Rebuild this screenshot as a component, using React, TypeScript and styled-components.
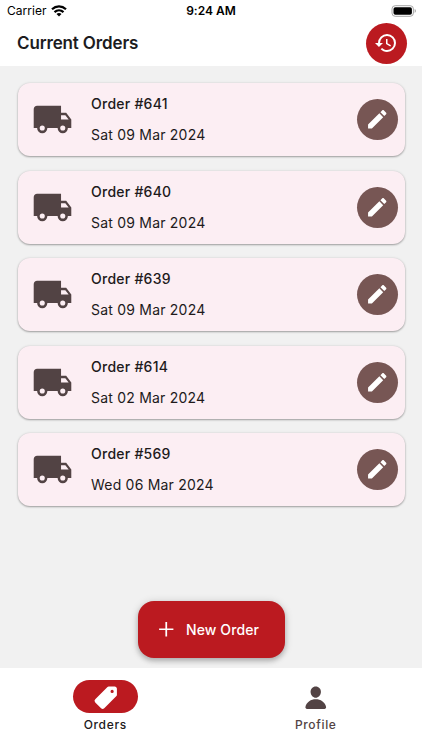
import React from "react";
import styled, { createGlobalStyle } from "styled-components";
import { IoPricetag, IoPerson } from "react-icons/io5";

const GlobalStyle = createGlobalStyle`
  * { box-sizing: border-box; }
  body { margin: 0; font-family: Inter, "Liberation Sans", sans-serif; color: #211a1b; background: #f1f1f1; }
  button { font: inherit; border: 0; padding: 0; cursor: pointer; }
  svg { display: block; }
`;

const Screen = styled.div`
  width: 100%;
  height: 750px;
  display: flex;
  flex-direction: column;
  overflow: hidden;
  background: #f1f1f1;
`;

const StatusBar = styled.div`
  height: 22px;
  flex: none;
  display: grid;
  grid-template-columns: 1fr auto 1fr;
  align-items: center;
  padding: 0 5px 0 7px;
  background: #fff;
  color: #000;
`;

const Carrier = styled.div`
  display: flex;
  align-items: center;
  gap: 4px;
  font-size: 12px;
  letter-spacing: 0.04px;
  line-height: 22px;
`;

const Clock = styled.div`
  font-size: 12px;
  font-weight: 600;
  letter-spacing: 0.02px;
  line-height: 22px;
  padding-right: 2px;
`;

const BatterySlot = styled.div`
  justify-self: end;
  padding-bottom: 1px;
`;

const Header = styled.header`
  height: 43.5px;
  flex: none;
  display: flex;
  align-items: center;
  justify-content: space-between;
  padding: 0 15.5px 1.5px 17px;
  background: #fff;
`;

const Title = styled.h1`
  margin: 0;
  font-size: 17px;
  font-weight: 600;
  line-height: 22px;
  letter-spacing: -0.14px;
  color: #1c1c1e;
`;

const RoundButton = styled.button<{ $color: string }>`
  width: 41px;
  height: 41px;
  flex: none;
  display: grid;
  place-items: center;
  border-radius: 50%;
  color: #fff;
  background: ${(p) => p.$color};
`;

const Content = styled.main`
  flex: 1;
  display: flex;
  flex-direction: column;
  align-items: center;
  justify-content: space-between;
  padding: 17.5px 17.5px 10px;
`;

const OrderList = styled.div`
  width: 100%;
  display: flex;
  flex-direction: column;
  gap: 14.5px;
`;

const OrderCard = styled.article`
  height: 73px;
  display: flex;
  align-items: center;
  padding: 0 6.5px 0 14px;
  border-radius: 12px;
  background: #fceef3;
  box-shadow: 0 1px 2px rgba(0, 0, 0, 0.32), 0 0 3px rgba(0, 0, 0, 0.1);
`;

const OrderText = styled.div`
  flex: 1;
  padding-left: 18.5px;
`;

const OrderName = styled.div`
  font-size: 14px;
  font-weight: 500;
  line-height: 20px;
  letter-spacing: 0.25px;
`;

const OrderDate = styled.div`
  margin-top: 11px;
  font-size: 14px;
  line-height: 20px;
  letter-spacing: 0.21px;
`;

const NewOrderButton = styled.button`
  width: 147px;
  height: 57px;
  display: flex;
  align-items: center;
  gap: 8px;
  padding-left: 16px;
  border-radius: 16px;
  background: #bb1a20;
  color: #fff;
  font-size: 14px;
  font-weight: 500;
  letter-spacing: 0.1px;
  box-shadow: 0 3px 5px rgba(0, 0, 0, 0.2), 0 1px 8px rgba(0, 0, 0, 0.16);
`;

const TabBar = styled.nav`
  height: 82px;
  flex: none;
  display: grid;
  grid-template-columns: 1fr 1fr;
  padding: 12px 1px 0 0;
  background: #fff;
`;

const Tab = styled.div`
  display: flex;
  flex-direction: column;
  align-items: center;
  gap: 4px;
`;

const TabPill = styled.div<{ $active?: boolean }>`
  width: 65px;
  height: 33px;
  display: grid;
  place-items: center;
  padding-top: 2px;
  border-radius: 17px;
  background: ${(p) => (p.$active ? "#bb1a20" : "transparent")};
  color: ${(p) => (p.$active ? "#fff" : "#524344")};
`;

const TabLabel = styled.div<{ $active?: boolean }>`
  font-size: 12px;
  font-weight: 500;
  line-height: 16px;
  letter-spacing: 0.65px;
  color: ${(p) => (p.$active ? "#211a1b" : "#524344")};
`;

const TRUCK =
  "M18 18.5A1.5 1.5 0 0 1 16.5 17A1.5 1.5 0 0 1 18 15.5A1.5 1.5 0 0 1 19.5 17A1.5 1.5 0 0 1 18 18.5M19.5 9.5L21.46 12H17V9.5M6 18.5A1.5 1.5 0 0 1 4.5 17A1.5 1.5 0 0 1 6 15.5A1.5 1.5 0 0 1 7.5 17A1.5 1.5 0 0 1 6 18.5M20 8H17V4H3C1.89 4 1 4.89 1 6V17H3A3 3 0 0 0 6 20A3 3 0 0 0 9 17H15A3 3 0 0 0 18 20A3 3 0 0 0 21 17H23V12L20 8Z";
const PENCIL =
  "M20.71 7.04C21.1 6.65 21.1 6 20.71 5.63L18.37 3.29C18 2.9 17.35 2.9 16.96 3.29L15.12 5.12L18.87 8.87M3 17.25V21H6.75L17.81 9.93L14.06 6.18L3 17.25Z";
const HISTORY =
  "M13.5 8H12V13L16.28 15.54L17 14.33L13.5 12.25V8M13 3A9 9 0 0 0 4 12H1L4.96 16.03L9 12H6A7 7 0 0 1 13 5A7 7 0 0 1 20 12A7 7 0 0 1 13 19C11.07 19 9.32 18.21 8.06 16.94L6.64 18.36C8.27 20 10.5 21 13 21A9 9 0 0 0 22 12A9 9 0 0 0 13 3";
const PLUS = "M19 12.85H12.85V19H11.15V12.85H5V11.15H11.15V5H12.85V11.15H19V12.85Z";

const Icon = ({ d, size, color = "currentColor" }: { d: string; size: number; color?: string }) => (
  <svg width={size} height={size} viewBox="0 0 24 24" fill={color} aria-hidden="true">
    <path d={d} />
  </svg>
);

const Wifi = () => (
  <svg width="16" height="12" viewBox="0 0 16 12" fill="none" stroke="#000" strokeWidth="2.2" aria-hidden="true">
    <path d="M1 4.3C5 .5 11 .5 15 4.3" />
    <path d="M3.5 7.1C6.1 4.7 9.9 4.7 12.5 7.1" />
    <path d="M8 11.4L5.5 8.9C6.9 7.7 9.1 7.7 10.5 8.9Z" fill="#000" stroke="none" />
  </svg>
);

const Battery = () => (
  <svg width="26" height="12" viewBox="0 0 26 12" aria-hidden="true">
    <rect x="1" y=".7" width="21.4" height="10.6" rx="3.2" fill="#fff" stroke="#a6a6a6" />
    <rect x="2.5" y="2.2" width="18.4" height="7.6" rx="1.8" fill="#000" />
    <path d="M23.7 4.1C25.2 4.7 25.2 7.3 23.7 7.9Z" fill="#999" />
  </svg>
);

const orders = [
  { id: 641, date: "Sat 09 Mar 2024" },
  { id: 640, date: "Sat 09 Mar 2024" },
  { id: 639, date: "Sat 09 Mar 2024" },
  { id: 614, date: "Sat 02 Mar 2024" },
  { id: 569, date: "Wed 06 Mar 2024" },
];

export default function App() {
  return (
    <Screen>
      <GlobalStyle />
      <StatusBar>
        <Carrier>
          Carrier
          <Wifi />
        </Carrier>
        <Clock>9:24 AM</Clock>
        <BatterySlot>
          <Battery />
        </BatterySlot>
      </StatusBar>
      <Header>
        <Title>Current Orders</Title>
        <RoundButton $color="#bb1a20" aria-label="Order history">
          <Icon d={HISTORY} size={24} />
        </RoundButton>
      </Header>
      <Content>
        <OrderList>
          {orders.map((order) => (
            <OrderCard key={order.id}>
              <Icon d={TRUCK} size={41} color="#524344" />
              <OrderText>
                <OrderName>Order #{order.id}</OrderName>
                <OrderDate>{order.date}</OrderDate>
              </OrderText>
              <RoundButton $color="#775654" aria-label="Edit order">
                <Icon d={PENCIL} size={24.5} />
              </RoundButton>
            </OrderCard>
          ))}
        </OrderList>
        <NewOrderButton>
          <Icon d={PLUS} size={24.5} />
          New Order
        </NewOrderButton>
      </Content>
      <TabBar>
        <Tab>
          <TabPill $active>
            <IoPricetag size={25.5} />
          </TabPill>
          <TabLabel $active>Orders</TabLabel>
        </Tab>
        <Tab>
          <TabPill>
            <IoPerson size={25.5} />
          </TabPill>
          <TabLabel>Profile</TabLabel>
        </Tab>
      </TabBar>
    </Screen>
  );
}
